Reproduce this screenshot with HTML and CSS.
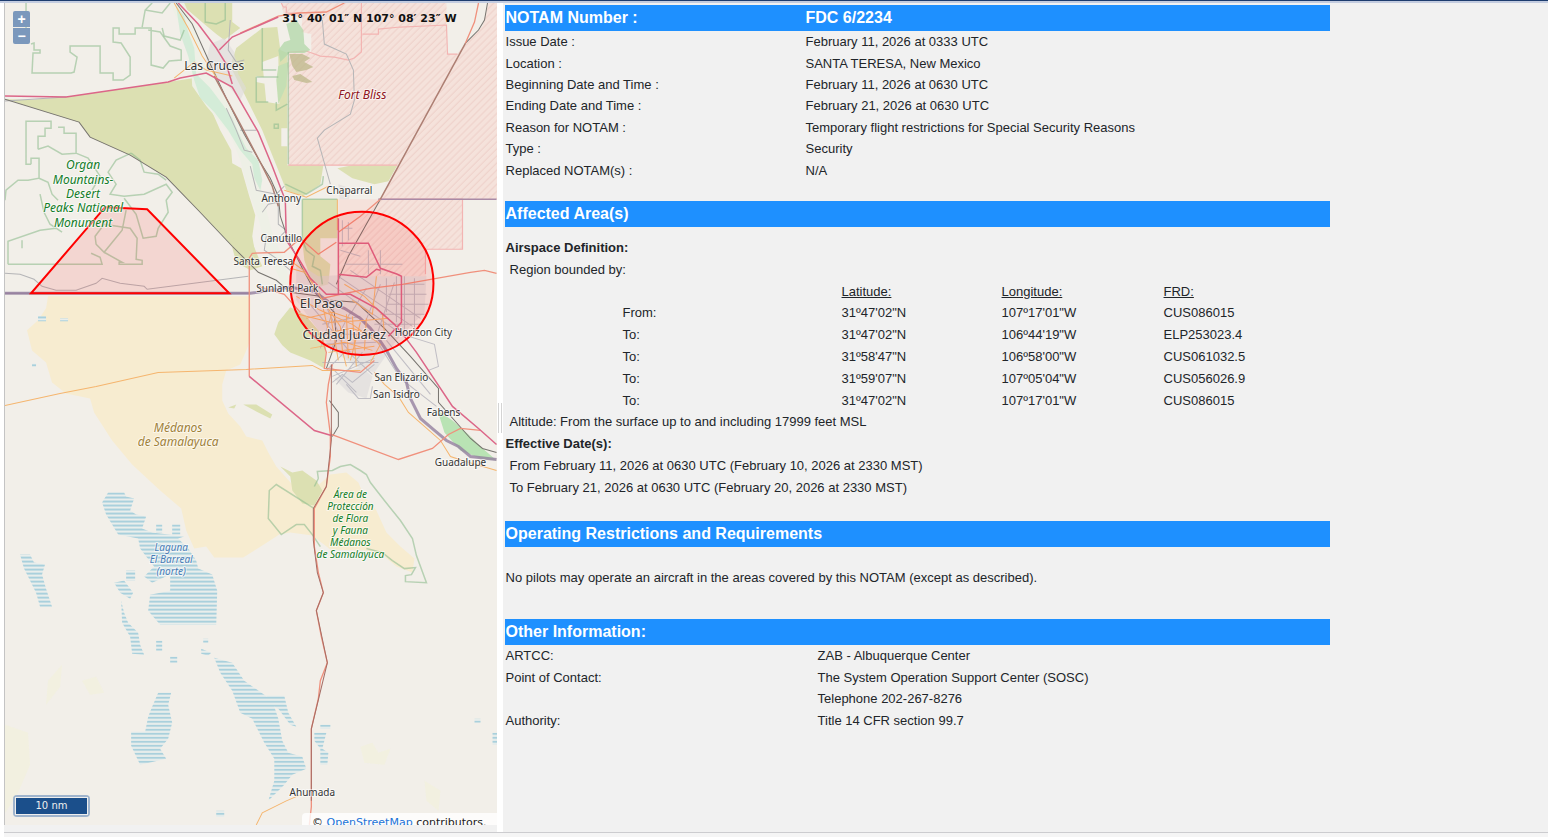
FILE: index.html
```html
<!DOCTYPE html>
<html lang="en">
<head>
<meta charset="utf-8">
<meta name="viewport" content="width=device-width, initial-scale=1">
<title>FDC 6/2234</title>
<link rel="stylesheet" href="styles.css">
</head>
<body>
<div class="topbar"></div>
<div class="split">
<section class="map" aria-label="Map">
<svg class="map-canvas" viewBox="5 3 491 822" preserveAspectRatio="xMinYMin slice" role="img" aria-label="Affected areas near El Paso">
<defs>
<pattern id="wet" width="8" height="4" patternUnits="userSpaceOnUse"><rect width="8" height="4" fill="#e9eeec"/><path d="M0 1H8" stroke="#a9d0dc" stroke-width="2"/></pattern>
<pattern id="mil" width="5" height="5" patternUnits="userSpaceOnUse" patternTransform="rotate(45)"><path d="M1 0V5" stroke="#efd3cc" stroke-width="1.2"/></pattern>
</defs>
<rect x="5" y="3" width="492" height="830" fill="#f2efe9"/>

<g class="sand">
<path d="M48 296H250V340L246 350 240 364 226 370 222 384 222 400 228 413 240 426 246 436 262 440 268 452 276 466 292 484 304 502 312 490 330 474 346 472 358 482 364 496 376 510 386 532 400 546 414 558 412 572 396 566 384 556 366 550 330 549 312 535 290 532 279 534 262 545 243 557 214 557 206 546 194 548 186 530 181 508 160 490 132 464 112 440 94 412 90 398 66 393 52 382 46 362 32 350 27 330 38 320 46 308Z"/>
</g>

<g class="scrub">
<path d="M5 99L28 100 66 97 168 82 194 78 198 94 212 112 220 130 231 150 232 163 241 168 249 196 255 215 252 236 256 260 252 266 232 246 198 210 166 177 130 155 90 137 79 122Z"/>
<path d="M178 3H232V22L240 28 224 40 216 34 204 24 190 12Z"/>
<path d="M236 48L262 28 277 27 280 50 287 53V165H323L320 184 303 196 286 190 274 160 262 130 246 98 230 66Z"/>
<path d="M337 168L352 165H397L388 181 374 184 352 178Z"/>
<path d="M302 199H337V238L320 238 320 256 330 264 328 284 314 288 304 260 302 240Z"/>
<path d="M230 240L248 232 256 252 262 266 250 270 236 262Z"/>
<path d="M290 307L305 315 318 330 326 346 324 368 310 360 290 352 282 345 274 334 278 322Z"/>
<path d="M280 466L292 472 302 470 316 480 322 490 314 505 302 503 292 490 290 476Z"/>
<path d="M243 404L256 404 272 414 270 418 256 411Z"/>
<path d="M228 407L236 404 234 408Z"/>
</g>
<path class="paper" d="M262 62L278 56 279 104 266 102ZM281 128H288V146H281ZM256 76L268 78 266 84 256 82Z"/>

<g class="valley">
<path d="M170 3H184L196 30 204 62 230 104 246 134 258 166 264 202 272 232 284 262 292 288 282 284 266 250 258 218 248 190 240 160 230 134 206 106 192 86 190 50Z" fill="#eef0e6"/>
<path d="M176 6L184 16 188 32 194 48 196 74 210 88 222 104 232 118 238 132 246 148 258 160 262 180 260 190 254 178 252 164 240 150 228 130 214 112 200 98 194 80 188 56 180 34Z" fill="#c9ead2" opacity=".7"/>
</g>

<g class="urban">
<path d="M210 44L224 38 234 52 238 74 246 88 240 100 228 86 214 76 206 60ZM338 184L350 188 348 206 340 206ZM296 262L318 276 338 275H402V262L426 276 424 312 396 340 374 372 356 366 332 350 318 330 296 300Z"/>
<path d="M334 378L360 366 372 376 366 398 348 392Z"/>
</g>

<g class="military">
<path d="M281 3L283 13 302 18 301 32 311 34V52L288 53V165H397L466 43 446 53V3Z"/>
<path d="M488 3H497V199H380L397 165 466 43 482 26ZM338 199H462V249H425V276H338Z"/>
</g>
<g fill="url(#mil)">
<path d="M281 3L283 13 302 18 301 32 311 34V52L288 53V165H397L466 43 446 53V3Z"/>
<path d="M488 3H497V199H380L397 165 466 43 482 26ZM378 199H462V249H425V276H338V250Z"/>
</g>
<path class="paper" d="M448 3H479L474 22 465 43 457 54H448Z"/>
<g fill="none" stroke="#f3b4b2" stroke-width="1.2">
<path d="M281 3L283 7H286V13H300M361 3V52L354 58 348 60 334 57 320 56 306 51 288 52M362 34H378V29L400 27 446 25 447 54H457M288 165H397M378 199H462V249H425V274"/>
</g>
<path d="M286 24L296 20 303 30 304 44 310 50 304 53 289 53 280 62 278 50 284 42 290 40Z" fill="#b4d8ab" opacity=".8"/>
<path d="M289 54H302L310 58 304 62 313 67 306 70 296 72 292 66ZM292 76L300 74 312 82 306 83 294 80Z" fill="#b9b584" opacity=".7"/>
<path d="M278 66L288 62 286 86 278 104 276 80Z" fill="#c5dfb4"/>
<path d="M437 410L452 420 468 434 480 446 496 460 480 458 460 450 444 432Z" fill="#b9e3b4"/>

<g class="reserve">
<path d="M26 3V40M31 44L34 43V50H40V53H33L32 73H71L74 72 77 57 70 52V46H100V73H113V80H123L130 75V57L121 43 113 42V28H119V34H135V28H151V65L163 68 169 61 181 60V50L170 46 160 32 148 30"/>
<path d="M142 27L145 10 152 3M145 10L162 13 170 3M162 28L164 36 180 40 184 30"/>
<path d="M31 164H26V121H51V128H45V136H38V149M58 127H64V133H76V153M38 149L48 146 62 154 76 153 88 158 100 176 92 190M31 164V158H39V178L28 180 18 180 6 190 5 200M39 178L48 182 52 194 58 200"/>
<path d="M131 153L116 160 108 172 116 184 110 194 124 196 144 194 166 184 172 192 166 200 168 212 158 228 156 236 143 238 136 214 124 198"/>
<path d="M131 153L140 160 144 172 158 174 166 180M40 194L44 212 50 224 62 232M8 264V241L40 230 56 228M22 240V248M8 264H102L100 257 91 253M104 252L122 262H119V264H142V260L136 259 137 238 130 228 104 224 95 236 96 244 104 252 122 230 126 210"/>
<path d="M205 3V22L216 24 225 20V3M256 77H278M256 77V102H268M262 28V70H276M288 52V164M276 102V110L287 104M274 124H278V128H274ZM285 184L306 194 322 184 323 176M302 199V239L306 250 314 256 312 266 320 270 322 284M302 199H337"/>
<path d="M318 478L317 471 332 470 340 466 350 464 360 470 366 474 370 482 384 500 400 520 412 538 416 555 426 582 405 581V575L411 574 415 567 404 568 392 560 382 552 366 548M318 478L314 486M314 508L276 484 269 490 268 518 281 534 296 524 304 524 312 534 320 546"/>
</g>

<g fill="none" stroke="#b5b5b7" stroke-width="1">
<path d="M5 273L20 274 34 279 42 286 56 290 76 290 96 283 102 278 120 283 144 286 147 289 248 276M5 101L66 97M322 20L324 44 346 54 353 70 354 100 350 114 324 130 317 138 326 170 330 184"/>
<path d="M230 20L228 50 236 62 244 60M240 130H256M226 108L236 130 244 150 252 152M250 166L256 190 276 194 284 186M262 212L268 204 278 202 278 224 286 230 276 240 266 236 264 250 276 258 290 270"/>
</g>
<path d="M5 293H250M378 199H496" fill="none" stroke="#a98aa6" stroke-width="1.6"/>

<g class="water" fill="url(#wet)">
<path d="M102 502L108 492 124 492 126 496 134 498 130 510 136 514 146 516 142 528 152 532 184 536 178 538 188 548 196 560 198 568 212 574 217 590 216 624 160 624 148 610 150 594 170 590V574L152 582 144 576 154 566 146 556 140 548 138 538 118 534 112 524 106 514Z"/>
<path d="M20 554L30 554 34 562 45 564 42 574 46 588 52 606 40 606 36 592 30 580 24 568ZM156 524H162V532H156ZM172 524H180V534H172ZM126 570H135V580H126ZM114 582L124 580 133 592 130 598 120 592ZM121 600L124 612 128 622 138 632 140 644 144 654 132 653 130 636 122 622Z"/>
<path d="M158 692H171L168 704 172 722 168 738 160 748 166 758 140 764 131 745 131 731H145L148 716 152 706ZM170 656H177V662H170ZM201 648L211 652 208 655 201 653Z"/>
<path d="M214 657L232 662 244 680 264 694 272 700 278 718 282 740 288 752 302 756 306 768 292 774 284 784 268 800 274 780 274 758 264 742 252 718 240 712 232 690 220 672Z"/>
<path d="M266 695H284L288 712 296 726 290 724 278 708 270 704ZM314 732H326L322 748 328 752 327 764H320V748L314 740ZM320 724H330V728H320Z"/>
<path d="M38 316H46V321H38ZM60 318H68V321H60ZM32 363H36V366H32ZM216 810H224V816H216ZM474 718H480V722H474ZM492 732H497V744H492ZM156 640H162V650H156ZM203 638H208V642H203Z"/>
</g>
<g fill="#f2f1dc" opacity=".7">
<path d="M5 724L28 732 30 764 18 792 5 812ZM48 680L62 664 60 686 46 704ZM360 746L372 742 378 752 390 748 384 764 364 762ZM424 780L440 790 438 810 426 800ZM82 680L96 676 104 692 90 694Z"/>
</g>

<g class="rail">
<path d="M5 99L79 122 90 137 130 155 166 177 198 210 232 246 258 272 276 280 290 292 320 296"/>
<path d="M176 3L192 24 210 64 226 98 244 134 260 162 270 178 278 196 280 216 288 240 302 268 316 294 334 312 336 340 326 368"/>
<path d="M487 3L484 20 478 30 465 43M330 300L356 302 384 328 410 356 438 388 438 402 470 438 482 448 496 452M380 199L348 256 336 284M329 400L338 412 338 426 332 436"/>
</g>
<g class="road-brown">
<path d="M465 43L380 199M214 76L240 124 262 166 272 186 278 206"/>
</g>
<g class="street">
<path d="M328 282L404 336M338 276L412 326M350 270L420 318M366 288L350 314M380 284L364 324M394 282L376 336M404 276V332M414 278V330M424 284H404M426 294H388M428 304H386M424 314H380M420 324H374M386 278V312M396 276V322M318 290L342 340M308 302L350 352M336 300L320 348M350 312L330 350M322 324L360 316M318 334L372 334M322 344L376 342M342 220V246M348 222V240M342 228H352M340 250L360 256M368 250V274M380 250V274M344 264H402"/>
<path d="M326 370L346 350 372 374M330 366L356 392M336 384L362 352M322 362L378 362M332 376L374 358M332 382L342 374 352 382 374 364M346 384L358 398 370 398 372 386M402 334L434 344 438 366 428 370M376 340L400 378 436 406M386 340L430 394"/>
</g>
<path class="border" d="M5 293H250L290 287 314 291 330 303 344 308 360 318 370 328 378 338 386 350 396 368 406 382 410 398 420 418 434 430 446 440 458 446 470 456 496 459"/>
<g class="orange-road">
<path d="M174 3L188 28 202 56 218 80M174 78L194 62 206 70 232 76M5 405L60 393 96 386 158 372 246 369 312 365 322 370 360 370M284 190L306 197 328 186M337 199V230M292 262L306 272 322 300 340 326 342 350 346 366M296 296L320 310 352 324 380 344 370 362M298 314L330 322 366 320 388 318M310 348L344 342 372 350M374 372L384 384 398 396 408 412 424 426 440 440 450 456 462 460 496 470M352 316L356 366M322 304L330 340M366 318L364 350M256 824L262 812 286 800 300 794"/>
<path d="M290 268L304 272 316 288M306 318L332 312 350 318M318 334L352 328 378 338M376 276L372 314 352 300M344 284L364 296 382 314 384 332M330 314L338 360M346 314L348 358M360 322L350 360M328 352L374 346"/>
</g>
<g class="trunk">
<path d="M240 33L278 16 298 13 326 12 344 3M478 3L474 22 465 43M249 293V258L252 253 284 252 300 238M300 238L318 254 336 242M496 273L484 270 470 272 436 278 402 284 370 288 340 294 322 298M380 199L360 216 338 232M249 293V376M322 340L326 352 324 368 360 372 374 360M332 364L328 384 326 402 330 434 330 456 326 486 314 508 314 546 318 572 323 592 316 610 321 636 327 662 320 680 318 698 311 728V806L309 824M331 434L398 459 432 448 448 434 460 428 480 430M258 286L284 294 300 312"/>
</g>
<g class="motorway">
<path d="M5 96L66 97 168 82 180 78 206 73 232 87 258 132 272 166 285 200 286 240 298 258 310 278 326 294 350 294 376 308 394 324 404 336 416 352 452 406 478 428 496 444M178 3L198 24 216 48 226 64 232 84M219 50L232 37 278 17M249 376L314 430 331 435M338 218V294M338 243H368L380 268 397 274 401 276V322L388 336M338 274L366 277 376 269 380 270"/>
</g>
<path d="M331 364V440L326 486 313 508 313 540 317 572 323 592 316 610 327 662 311 728V800" fill="none" stroke="#a56d65" stroke-width="1"/>

<g class="area">
<path d="M105 207L147 209 229 293H31Z"/>
<circle cx="361.500" cy="283" r="71.500"/>
</g>

<g class="place">
<text class="town" x="214" y="70">Las Cruces</text>
<text class="city" x="321" y="308">El Paso</text>
<text class="city" x="344" y="339">Ciudad Juárez</text>
<text x="349" y="194">Chaparral</text>
<text x="281" y="202">Anthony</text>
<text x="281" y="242">Canutillo</text>
<text x="263" y="265">Santa Teresa</text>
<text x="287" y="292">Sunland Park</text>
<text x="423" y="336">Horizon City</text>
<text x="401" y="381">San Elizario</text>
<text x="396" y="398">San Isidro</text>
<text x="443" y="416">Fabens</text>
<text x="460" y="466">Guadalupe</text>
<text x="312" y="795">Ahumada</text>
</g>
<g class="place park">
<text x="83" y="169">Organ</text><text x="83" y="184">Mountains-</text><text x="83" y="198">Desert</text><text x="83" y="212">Peaks National</text><text x="83" y="227">Monument</text>
</g>
<g class="place park small">
<text x="350" y="497">Área de</text><text x="350" y="509">Protección</text><text x="350" y="521">de Flora</text><text x="350" y="533">y Fauna</text><text x="350" y="545">Médanos</text><text x="350" y="557">de Samalayuca</text>
</g>
<g class="place base"><text x="362" y="99">Fort Bliss</text></g>
<g class="place dune"><text x="178" y="432">Médanos</text><text x="178" y="446">de Samalayuca</text></g>
<g class="place lake small"><text x="171" y="550">Laguna</text><text x="171" y="562">El Barreal</text><text x="171" y="574">(norte)</text></g>
</svg>
<div class="zoom"><button type="button" aria-label="Zoom in">+</button><button type="button" aria-label="Zoom out">−</button></div>
<div class="position">31° 40′ 01″ N 107° 08′ 23″ W</div>
<div class="scale"><div class="scale-line">10 nm</div></div>
<div class="attribution">© <a href="#osm">OpenStreetMap</a> contributors.</div>
</section>
<div class="splitter"></div>
<main class="details">
<div class="notam">
<table class="summary">
<thead><tr><th scope="col">NOTAM Number :</th><th scope="col">FDC 6/2234</th></tr></thead>
<tbody>
<tr><td>Issue Date :</td><td>February 11, 2026 at 0333 UTC</td></tr>
<tr><td>Location :</td><td>SANTA TERESA, New Mexico</td></tr>
<tr><td>Beginning Date and Time :</td><td>February 11, 2026 at 0630 UTC</td></tr>
<tr><td>Ending Date and Time :</td><td>February 21, 2026 at 0630 UTC</td></tr>
<tr><td>Reason for NOTAM :</td><td>Temporary flight restrictions for Special Security Reasons</td></tr>
<tr><td>Type :</td><td>Security</td></tr>
<tr><td>Replaced NOTAM(s) :</td><td>N/A</td></tr>
</tbody>
</table>
<section>
<h2>Affected Area(s)</h2>
<div class="areas">
<h3>Airspace Definition:</h3>
<p class="indent">Region bounded by:</p>
<table class="points">
<colgroup><col class="leg"><col class="lat"><col class="lon"><col></colgroup>
<thead><tr><td></td><th scope="col">Latitude:</th><th scope="col">Longitude:</th><th scope="col">FRD:</th></tr></thead>
<tbody>
<tr><td>From:</td><td>31º47'02"N</td><td>107º17'01"W</td><td>CUS086015</td></tr>
<tr><td>To:</td><td>31º47'02"N</td><td>106º44'19"W</td><td>ELP253023.4</td></tr>
<tr><td>To:</td><td>31º58'47"N</td><td>106º58'00"W</td><td>CUS061032.5</td></tr>
<tr><td>To:</td><td>31º59'07"N</td><td>107º05'04"W</td><td>CUS056026.9</td></tr>
<tr><td>To:</td><td>31º47'02"N</td><td>107º17'01"W</td><td>CUS086015</td></tr>
</tbody>
</table>
<p class="indent">Altitude: From the surface up to and including 17999 feet MSL</p>
<h3>Effective Date(s):</h3>
<p class="indent">From February 11, 2026 at 0630 UTC (February 10, 2026 at 2330 MST)</p>
<p class="indent">To February 21, 2026 at 0630 UTC (February 20, 2026 at 2330 MST)</p>
</div>
</section>
<section>
<h2>Operating Restrictions and Requirements</h2>
<p class="restriction">No pilots may operate an aircraft in the areas covered by this NOTAM (except as described).</p>
</section>
<section>
<h2>Other Information:</h2>
<table class="other">
<tbody>
<tr><td>ARTCC:</td><td>ZAB - Albuquerque Center</td></tr>
<tr><td>Point of Contact:</td><td>The System Operation Support Center (SOSC)</td></tr>
<tr><td></td><td>Telephone 202-267-8276</td></tr>
<tr><td>Authority:</td><td>Title 14 CFR section 99.7</td></tr>
</tbody>
</table>
</section>
</div>
</main>
</div>
</body>
</html>
```
FILE: styles.css
```css
* { box-sizing: border-box; }

body {
  margin: 0;
  min-height: 100vh;
  display: flex;
  flex-direction: column;
  padding: 0 0 4px 4px;
  background: linear-gradient(to right, #fff 4px, #f5f5f5 4px);
  color: #212529;
  font: 13px/21px "Liberation Sans", Arial, sans-serif;
}

.topbar {
  height: 3px;
  margin-left: -4px;
  background: #c3cce0;
  border-top: 1px solid #1d3c6e;
}

.split {
  flex: 1;
  display: flex;
  border-bottom: 1px solid #cccccf;
  background: #f1f1f1;
}

.map {
  position: relative;
  flex: 0 0 31.9%;
  margin-bottom: 7px;
  overflow: hidden;
  border-left: 1px solid #c4c4c4;
}

.map-canvas {
  position: absolute;
  inset: 0;
  width: 100%;
  height: 100%;
}

.sand { fill: #f7ecd0; }
.scrub { fill: #dce0b2; }
.paper { fill: #f2efe9; }
.urban { fill: #dddadb; opacity: .6; }
.military { fill: #f5e2db; }
.reserve { fill: none; stroke: #8fbc8f; stroke-opacity: .6; stroke-width: 1.5; }
.border { fill: none; stroke: #94809f; stroke-opacity: .8; stroke-width: 3; }
.rail { fill: none; stroke: #77746f; stroke-width: 1; }
.road-brown { fill: none; stroke: #ad7f73; stroke-width: 1.5; }
.orange-road { fill: none; stroke: #f5b56e; stroke-width: 1; }
.street { fill: none; stroke: #b4b2bc; stroke-width: 1; opacity: .8; }
.trunk { fill: none; stroke: #f0907c; stroke-width: 1.3; }
.motorway { fill: none; stroke: #dc6688; stroke-width: 1.5; }
.area { fill: rgba(255, 0, 0, .1); stroke: #f00; stroke-width: 2; }

.place {
  font: 10px "Noto Sans", sans-serif;
  text-anchor: middle;
  fill: #333;
  stroke: rgba(255, 255, 255, .6);
  stroke-width: 2px;
  stroke-linejoin: round;
  paint-order: stroke;
}
.place .town { font-size: 12px; }
.place .city { font-size: 13px; }
.park, .base, .dune, .lake { font-size: 12px; font-style: italic; }
.park { fill: #137d28; }
.base { fill: #8f1320; }
.dune { fill: #a08139; }
.lake { fill: #4a7cb5; }
.small { font-size: 10px; }

.zoom {
  position: absolute;
  top: 8px;
  left: 8px;
  display: grid;
  gap: 1px;
}
.zoom button {
  width: 17px;
  height: 16px;
  padding: 0;
  border: 0;
  background: #7b98bc;
  color: #fff;
  font: bold 14px/14px "Liberation Sans", Arial, sans-serif;
}
.zoom button:first-child { border-radius: 2px 2px 0 0; }
.zoom button:last-child { border-radius: 0 0 2px 2px; }

.position {
  position: absolute;
  top: 8px;
  right: 40px;
  color: #111;
  font: bold 11px/15px "DejaVu Sans", Verdana, sans-serif;
  white-space: nowrap;
}

.scale {
  position: absolute;
  left: 8px;
  bottom: 8px;
  padding: 2px;
  border-radius: 4px;
  background: #9fb4cd;
}
.scale-line {
  width: 73px;
  border: 1px solid #eee;
  background: #1b4f8b;
  color: #eee;
  font: 10px/16px "DejaVu Sans", Verdana, sans-serif;
  text-align: center;
}

.attribution {
  position: absolute;
  right: 0;
  bottom: -8px;
  padding: 0 10px;
  border-radius: 4px 0 0 0;
  background: rgba(255, 255, 255, .8);
  color: #222;
  font: 11px/20px "DejaVu Sans", Verdana, sans-serif;
  white-space: nowrap;
}
.attribution a { color: #1a73d8; }

.splitter {
  flex: 0 0 6px;
  background: linear-gradient(#d4d4d4, #d4d4d4) 1px 50% / 1px 30px no-repeat,
    linear-gradient(#d4d4d4, #d4d4d4) 4px 50% / 1px 30px no-repeat, #fff;
}

.details {
  flex: 1;
  min-width: 0;
  padding: 2px;
  background: #f1f1f1;
}
.notam {
  max-width: 825px;
  display: grid;
  gap: 20px;
}

table { width: 100%; border-collapse: collapse; table-layout: fixed; }
td, th { padding: 0 1px; text-align: left; font-weight: normal; }
p, h2, h3 { margin: 0; }

h2, .summary th {
  height: 26px;
  padding: 0 1px;
  background: #1e90ff;
  color: #fff;
  font-size: 16px;
  font-weight: bold;
  line-height: 26px;
}

.summary { height: 176px; }
.summary th:first-child { width: 300px; }

.areas { padding: 10px 0 2px; line-height: 22px; }
h3 { padding-left: 1px; font-size: 13px; line-height: 22px; }
.indent { padding-left: 5px; }

.points { height: 130px; line-height: 21px; }
.points th { text-decoration: underline; }
.points .leg { width: 336px; }
.points .lat { width: 160px; }
.points .lon { width: 162px; }
.points td:first-child { padding-left: 118px; }

.restriction { padding: 20px 1px 11px; }

.other { height: 86px; }
.other td:first-child { width: 312px; }
```
